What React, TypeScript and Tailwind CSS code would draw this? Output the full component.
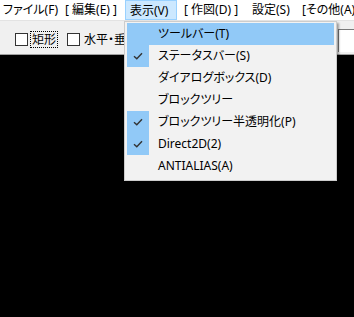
import type { ReactNode } from "react";

const FONT = '"Noto Sans", "Noto Sans CJK JP", sans-serif';

const menus = [
  { label: "ファイル(F)", w: "w-[60px]", pl: "pl-[3px]" },
  { label: "[ 編集(E) ]", w: "w-[65px]", pl: "pl-[5px]" },
  { label: "表示(V)", w: "w-[52px]", pl: "pl-[4px]", open: true },
  { label: "[ 作図(D) ]", w: "w-[68px]", pl: "pl-[7px]" },
  { label: "設定(S)", w: "w-[51px]", pl: "pl-[7px]" },
  { label: "[その他(A)", w: "w-[60px]", pl: "pl-[6px]" },
];

const items = [
  { label: "ツールバー(T)", checked: false, hover: true },
  { label: "ステータスバー(S)", checked: true },
  { label: "ダイアログボックス(D)", checked: false },
  { label: "ブロックツリー", checked: false },
  { label: "ブロックツリー半透明化(P)", checked: true },
  { label: "Direct2D(2)", checked: true },
  { label: "ANTIALIAS(A)", checked: false },
];

function Check() {
  return (
    <svg width="10" height="8" viewBox="0 0 10 8" className="block">
      <path d="M1 4.2 L3.8 6.8 L9 1.2" fill="none" stroke="#333" strokeWidth="1.4" />
    </svg>
  );
}

function CheckBox({ children, focus }: { children: ReactNode; focus?: boolean }) {
  return (
    <div className="flex items-center">
      <span className="block h-[13px] w-[13px] border border-[#333] bg-white" />
      <span
        className={`ml-[3px] px-[1px] leading-[15px] text-[12px] text-black ${
          focus ? "outline-1 outline-dotted outline-black" : ""
        }`}
      >
        {children}
      </span>
    </div>
  );
}

export default function App() {
  return (
    <div
      className="relative h-[317px] w-[354px] overflow-hidden bg-black [font-feature-settings:'palt']"
      style={{ fontFamily: FONT }}
    >
      <div className="flex h-[20px] bg-white text-[12px] text-black">
        {menus.map((m) => (
          <div
            key={m.label}
            className={`${m.w} ${m.pl} shrink-0 whitespace-nowrap leading-[19px] ${
              m.open ? "border border-[#99d1ff] bg-[#cce8ff] leading-[17px]" : ""
            }`}
          >
            {m.label}
          </div>
        ))}
      </div>
      <div className="h-[35px] border-t border-[#e3e3e3] border-b border-b-[#a0a0a0] bg-[#f0f0f0]">
        <div className="flex items-center gap-[10px] pl-[15px] pt-[11px]">
          <CheckBox focus>矩形</CheckBox>
          <CheckBox>水平・垂直</CheckBox>
        </div>
        <div className="absolute left-[338px] top-[29px] h-[23px] w-[20px] border-t border-l border-[#7a7a7a] bg-white" />
      </div>

      <div className="absolute left-[124px] top-[21px] w-[213px] border border-[#cccccc] bg-[#f2f2f2] px-[2px] pt-[1px] pb-[3px] shadow-[2px_2px_2px_rgba(0,0,0,0.35)]">
        {items.map((it) => (
          <div
            key={it.label}
            className={`flex h-[22px] items-center text-[12px] text-black ${
              it.hover ? "bg-[#91c9f7]" : ""
            }`}
          >
            <div
              className={`flex h-[22px] w-[22px] items-center justify-center ${
                it.checked ? "bg-[#91c9f7]" : ""
              }`}
            >
              {it.checked && <Check />}
            </div>
            <span className="ml-[9px] whitespace-nowrap leading-[22px]">{it.label}</span>
          </div>
        ))}
      </div>
    </div>
  );
}
